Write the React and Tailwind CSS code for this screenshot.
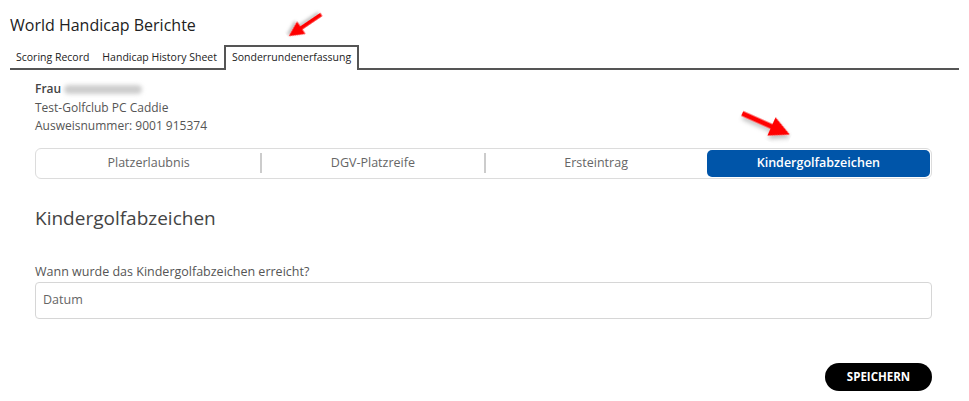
function Arrow({ className, rotate, width = 56 }) {
  // red callout arrow, drawn pointing right then rotated
  return (
    <svg
      className={className}
      width={width}
      height={(width * 30) / 56}
      viewBox="0 0 56 30"
      style={{ transform: `rotate(${rotate}deg)` }}
    >
      <defs>
        <filter id={`sh${rotate}`} x="-20%" y="-40%" width="160%" height="200%">
          <feDropShadow dx="2" dy="3" stdDeviation="2" floodColor="#000" floodOpacity="0.25" />
        </filter>
      </defs>
      <g filter={`url(#sh${rotate})`}>
        <path d="M2 12.5 L34 12.5 L34 5 L54 15 L34 25 L34 17.5 L2 17.5 Z" fill="#ff0000" />
      </g>
    </svg>
  );
}

const segments = ['Platzerlaubnis', 'DGV-Platzreife', 'Ersteintrag', 'Kindergolfabzeichen'];

export default function App() {
  return (
    <div
      className="relative w-[969px] h-[401px] bg-white overflow-hidden text-[#555]"
      style={{ fontFamily: '"Open Sans", "Noto Sans", sans-serif' }}
    >
      <h1 className="pl-[10px] pt-[14px] text-[16px] leading-[22px] text-[#222]">World Handicap Berichte</h1>

      {/* report tabs */}
      <div className="mx-[10px] mt-[9px] flex items-end border-b-2 border-[#555] text-[10.5px] leading-[15px] text-[#222]">
        <div className="px-[6px] pb-[3px]">Scoring Record</div>
        <div className="px-[6px] pb-[3px] ml-[1px]">Handicap History Sheet</div>
        <div className="ml-[1px] -mb-[2px] border-2 border-b-0 border-[#555] bg-white px-[6px] pt-[3px] pb-[5px]">
          Sonderrundenerfassung
        </div>
      </div>

      {/* player */}
      <div className="pl-[35px] pt-[10px] text-[12px] leading-[18.5px]">
        <div className="flex items-center">
          <span className="font-semibold text-[#444]">Frau</span>
          <span className="ml-[3px] h-[9px] w-[78px] rounded-full bg-[#cdcdcd] blur-[2px]" />
        </div>
        <div>Test-Golfclub PC Caddie</div>
        <div>Ausweisnummer: 9001 915374</div>
      </div>

      {/* round type selector */}
      <div className="ml-[35px] mt-[12px] flex h-[31px] w-[897px] rounded-[6px] border border-[#dcdcdc] p-[1px] text-[12.5px] text-[#666]">
        {segments.map((s, i) => {
          const active = i === segments.length - 1;
          return (
            <div key={s} className="flex flex-1 items-center">
              {i > 0 && !active && <div className="h-[20px] w-[2px] bg-[#ccc]" />}
              <div
                className={
                  active
                    ? 'flex h-full flex-1 items-center justify-center rounded-[5px] bg-[#0055a9] font-semibold text-white'
                    : 'flex h-full flex-1 items-center justify-center'
                }
              >
                {s}
              </div>
            </div>
          );
        })}
      </div>

      <h2 className="pl-[35px] pt-[25px] text-[19px] leading-[28px] text-[#444]">Kindergolfabzeichen</h2>

      <div className="pl-[35px] pt-[31px] text-[12.5px] leading-[18px]">Wann wurde das Kindergolfabzeichen erreicht?</div>
      <div className="ml-[35px] mt-[1px] flex h-[37px] w-[897px] items-center rounded-[4px] border border-[#d6d6d6] px-[7px] text-[12.5px] text-[#666]">
        Datum
      </div>

      <div className="mt-[44px] flex justify-end pr-[37px]">
        <button className="h-[28px] w-[107px] rounded-full bg-black text-[11.5px] font-bold text-white">
          SPEICHERN
        </button>
      </div>

      <Arrow className="absolute left-[284px] top-[14px]" rotate={146} width={42} />
      <Arrow className="absolute left-[738px] top-[109px]" rotate={24} />
    </div>
  );
}
